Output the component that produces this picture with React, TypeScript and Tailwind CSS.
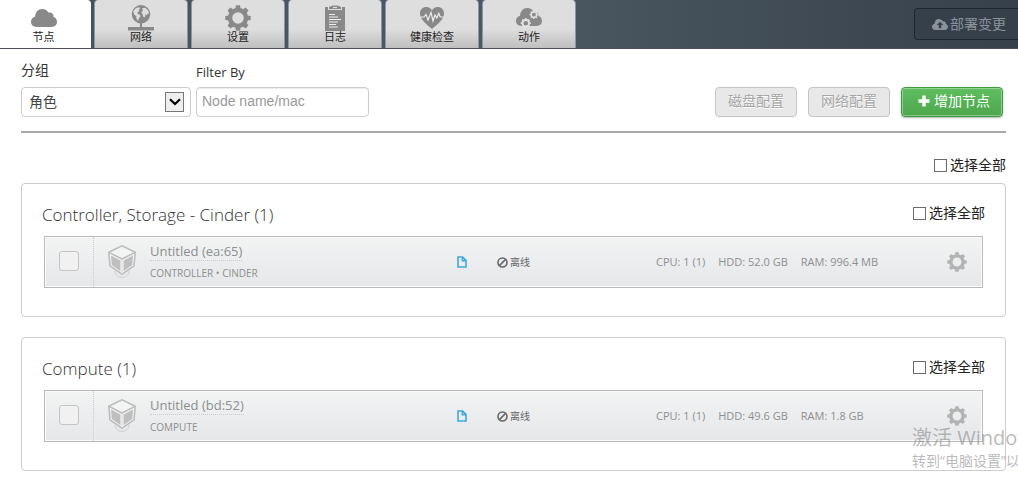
import React from "react";
import clsx from "clsx";

type NodeInfo = {
  name: string;
  roles: string;
  cpu: string;
  hdd: string;
  ram: string;
};

const groups: { title: string; nodes: NodeInfo[] }[] = [
  {
    title: "Controller, Storage - Cinder (1)",
    nodes: [
      {
        name: "Untitled (ea:65)",
        roles: "CONTROLLER • CINDER",
        cpu: "1 (1)",
        hdd: "52.0 GB",
        ram: "996.4 MB",
      },
    ],
  },
  {
    title: "Compute (1)",
    nodes: [
      {
        name: "Untitled (bd:52)",
        roles: "COMPUTE",
        cpu: "1 (1)",
        hdd: "49.6 GB",
        ram: "1.8 GB",
      },
    ],
  },
];

const toothAngles = [0, 45, 90, 135, 180, 225, 270, 315];

const GearShape = () => (
  <g>
    <circle cx="13" cy="13" r="8" fill="none" stroke="currentColor" strokeWidth="4.4" />
    {toothAngles.map((a) => (
      <path key={a} d="M10.4 4 L10.9 0.3 H15.1 L15.6 4 Z" fill="currentColor" transform={`rotate(${a} 13 13)`} />
    ))}
  </g>
);

const GearIcon = ({ className }: { className?: string }) => (
  <svg viewBox="0 0 26 26" className={className} aria-hidden="true">
    <GearShape />
  </svg>
);

const cloudPath =
  "M5.5 18 C2 18 0 15.8 0 12.8 C0 10.2 1.7 8.3 4 7.8 C4.2 3.4 7 0 11.2 0 C14.2 0 16.4 1.5 17.6 3.8 C20.4 3 22.8 5 22.6 8 C24.8 8.7 26 10.5 26 12.8 C26 15.8 24 18 20.6 18 Z";

const CloudIcon = () => (
  <svg viewBox="0 0 26 18" className="h-[18px] w-[26px]" aria-hidden="true">
    <path d={cloudPath} fill="currentColor" />
  </svg>
);

const GlobeIcon = () => (
  <svg viewBox="0 0 26 26" className="size-[26px]" aria-hidden="true">
    <circle cx="13" cy="9.2" r="9.2" fill="currentColor" />
    <path
      d="M5.2 6.2 L8 3 L11 2.2 L12.4 3.4 L10.6 4.6 L11.4 6 L9.4 7.4 L9.8 9 L11.6 9.4 L12.6 11 L10.8 13.4 L10 16 L8.4 13.4 L8.2 11 L6.4 10 Z M14 3.2 L17.4 2.8 L20.4 5.8 L21 9 L19.4 8.4 L19 10.6 L17.6 9.2 L16.8 12.4 L15 11.6 L14.4 8.8 L13.2 7.6 L14.8 5.6 Z"
      fill="#dddddd"
    />
    <path d="M12 18 H14 V22 H26 V25.4 H0 V22 H12 Z" fill="currentColor" />
  </svg>
);

const LogsIcon = () => (
  <svg viewBox="0 0 20 26" className="h-[26px] w-5" aria-hidden="true">
    <path d="M0 2 H3 V5 H17 V2 H20 V26 H0 Z" fill="currentColor" />
    <path d="M4 4 V2 L7.5 0.5 H12.5 L16 2 V4 Z" fill="currentColor" />
    <path d="M8 2.5 H12" stroke="#dddddd" strokeWidth="1.2" />
    <path d="M4 9.5 H10 M4 12 H13 M4 14.5 H16 M4 17 H13 M4 19.5 H11 M4 22 H13" stroke="#eeeeee" strokeWidth="1.1" />
  </svg>
);

const HeartIcon = () => (
  <svg viewBox="0 0 24 22" className="h-[22px] w-6" aria-hidden="true">
    <path
      d="M12 22 C8 18.2 0 13 0 6.4 C0 2.6 2.8 0 6.2 0 C9 0 11 1.4 12 3.4 C13 1.4 15 0 17.8 0 C21.2 0 24 2.6 24 6.4 C24 13 16 18.2 12 22 Z"
      fill="currentColor"
    />
    <path
      d="M0.6 10 H4 L6 7.4 L8 13 L11 5.4 L13 14 L15 8 L16.8 11 L18.8 6.4 L20.2 10 H23.4"
      fill="none"
      stroke="#eeeeee"
      strokeWidth="1.2"
    />
  </svg>
);

const ActionsIcon = () => (
  <svg viewBox="0 0 26 20" className="h-5 w-[26px]" aria-hidden="true">
    <path d={cloudPath} fill="currentColor" />
    <g transform="translate(13.5 2.2) scale(0.34)" className="text-[#e2e2e2]">
      <GearShape />
    </g>
    <g transform="translate(4.6 10) scale(0.4)" className="text-[#e2e2e2]">
      <GearShape />
    </g>
  </svg>
);

const ServerIcon = () => (
  <svg viewBox="0 0 28 33" className="h-[33px] w-7 shrink-0" aria-hidden="true">
    <path d="M6.5 26 C8 31 11 32.4 14 32.4 C17 32.4 20 31 21.5 26" fill="none" stroke="#cccccc" />
    <path d="M0.8 7.2 L14 0.8 L27.2 7.2 L26 20.8 L14 29.2 L2 20.8 Z" fill="#f3f4f4" stroke="#bdbdbd" strokeWidth="1.6" />
    <path d="M1 7.4 L14 14 L27 7.4 M14 14 V29" fill="none" stroke="#bdbdbd" strokeWidth="1.6" />
    <path d="M3 10.6 L12.4 15.4 V26.2 L3.8 20 Z M25 10.6 L15.6 15.4 V26.2 L24.2 20 Z" fill="#bfbfbf" />
    <path d="M14 14.8 V28.6" stroke="#f3f4f4" strokeWidth="1.4" />
  </svg>
);

const FileIcon = () => (
  <svg viewBox="0 0 10 12" className="h-3 w-[10px]" aria-hidden="true">
    <path d="M1 1 H5.6 L9 4.4 V11 H1 Z M5.4 1 V4.8 H9" fill="none" stroke="#3fa9dc" strokeWidth="1.6" />
  </svg>
);

const BanIcon = () => (
  <svg viewBox="0 0 11 11" className="size-[11px]" aria-hidden="true">
    <circle cx="5.5" cy="5.5" r="4.5" fill="none" stroke="currentColor" strokeWidth="1.6" />
    <path d="M2.4 8.6 L8.6 2.4" stroke="currentColor" strokeWidth="1.5" />
  </svg>
);

const UploadIcon = () => (
  <svg viewBox="0 0 26 18" className="h-[11px] w-4" aria-hidden="true">
    <path d={cloudPath} fill="currentColor" />
    <path d="M13 4.6 L18.4 10 H15 V15 H11 V10 H7.6 Z" fill="#35404b" />
  </svg>
);

const tabs = [
  { label: "节点", icon: <CloudIcon />, active: true },
  { label: "网络", icon: <GlobeIcon /> },
  { label: "设置", icon: <GearIcon className="size-[26px]" /> },
  { label: "日志", icon: <LogsIcon /> },
  { label: "健康检查", icon: <HeartIcon /> },
  { label: "动作", icon: <ActionsIcon /> },
];

const Header = () => (
  <header className="flex justify-between border-b border-[#4a4e56] bg-linear-to-r from-[#46525d] via-[#4c5862] to-[#36414c]">
    <nav className="flex gap-[3px]">
      {tabs.map((tab) => (
        <a
          key={tab.label}
          href="#"
          className={clsx(
            "flex h-12 flex-col items-center text-[11px] leading-[14px] text-[#222222]",
            tab.active
              ? "w-[91px] rounded-tr-sm bg-white pr-1"
              : "w-[94px] rounded-t-sm border-x border-[#8b97a5] bg-linear-to-b from-[#dedede] from-60% to-[#bfbfbf]"
          )}
        >
          <span className="flex h-[30px] items-center pt-[6px] text-[#898989]">{tab.icon}</span>
          {tab.label}
        </a>
      ))}
    </nav>
    <div className="pt-2">
      <button
        disabled
        className="flex h-8 items-center gap-[2px] rounded-l border border-r-0 border-[#20272e] bg-[#35404b] pr-3 pl-[17px] text-sm text-[#8b9299]"
      >
        <UploadIcon />
        部署变更
      </button>
    </div>
  </header>
);

const SelectAll = ({ id }: { id: string }) => (
  <div className="flex items-center gap-[3px] text-sm leading-5 text-[#222222]">
    <input id={id} type="checkbox" className="size-[13px] appearance-none border border-[#6b6b6b] bg-white checked:bg-gray-500" />
    <label htmlFor={id}>选择全部</label>
  </div>
);

const Toolbar = () => (
  <div className="flex items-end justify-between border-b-2 border-[#a9a9a9] pt-[11px] pb-[14px]">
    <div className="flex gap-[5px] text-[#333333]">
      <div>
        <label htmlFor="grouping" className="block h-[27px] text-sm leading-5">
          分组
        </label>
        <div className="relative">
          <select
            id="grouping"
            className="block h-[30px] w-[170px] appearance-none rounded border border-[#cccccc] bg-white px-[7px] text-sm text-[#444444]"
          >
            <option>角色</option>
          </select>
          <span className="pointer-events-none absolute top-[5px] right-[7px] flex h-5 w-[19px] items-center justify-center border border-[#777777] bg-[#eeeeee]">
            <svg viewBox="0 0 12 8" className="h-2 w-3" aria-hidden="true">
              <path d="M1 1.2 L6 6 L11 1.2" fill="none" stroke="#000000" strokeWidth="2.2" />
            </svg>
          </span>
        </div>
      </div>
      <div>
        <label htmlFor="filter" className="block h-[27px] text-[13px] leading-6">
          Filter By
        </label>
        <input
          id="filter"
          type="text"
          placeholder="Node name/mac"
          className="block h-[30px] w-[173px] rounded border border-[#cccccc] bg-white px-[5px] pb-[2px] font-['Liberation_Sans',sans-serif] text-sm shadow-[inset_0_1px_1px_rgba(0,0,0,0.08)] placeholder:text-[#999999]"
        />
      </div>
    </div>
    <div className="flex gap-[11px] pr-[3px] text-sm">
      {["磁盘配置", "网络配置"].map((label) => (
        <button
          key={label}
          disabled
          className="h-[30px] rounded border border-[#c4c4c4] bg-[#e8e8e8] px-3 pb-[2px] text-[#a5a5a5] [text-shadow:0_1px_0_#fff]"
        >
          {label}
        </button>
      ))}
      <button className="flex h-[30px] items-center gap-1 rounded border border-[#3f9a3f] bg-linear-to-b from-[#5fbe5f] to-[#4ea64e] pr-3 pb-[2px] pl-4 text-white shadow-[inset_0_0_0_1px_rgba(255,255,255,0.35),0_1px_2px_rgba(0,0,0,0.3)]">
        <svg viewBox="0 0 12 12" className="size-3" aria-hidden="true">
          <path d="M6 0.5 V11.5 M0.5 6 H11.5" stroke="currentColor" strokeWidth="3.4" />
        </svg>
        增加节点
      </button>
    </div>
  </div>
);

const NodeRow = ({ node }: { node: NodeInfo }) => (
  <div className="flex h-[52px] items-center border border-[#b9babb] bg-linear-to-b from-[#f2f3f3] to-[#e6e7e9] text-[#8d8f8f] shadow-[inset_0_0_0_1px_#fafafa]">
    <div className="flex w-[49px] items-center self-stretch border-r border-dotted border-[#cccccc] pb-[2px] pl-[14px]">
      <input
        type="checkbox"
        aria-label={node.name}
        className="size-5 appearance-none rounded-[3px] border border-[#c4c4c4] bg-[#f1f1f1] checked:bg-gray-400"
      />
    </div>
    <div className="flex w-14 justify-center pb-[2px]">
      <ServerIcon />
    </div>
    <div className="min-w-0 flex-1 pb-1">
      <button className="block border-b border-dotted border-[#cccccc] text-[13px] leading-[18px]">{node.name}</button>
      <div className="pt-[6px] text-[10px] leading-3">{node.roles}</div>
    </div>
    <div className="w-10">
      <a href="#" aria-label="日志" className="block">
        <FileIcon />
      </a>
    </div>
    <div className="flex w-[159px] items-center gap-[2px] text-[10px] text-[#666666]">
      <BanIcon />
      离线
    </div>
    <div className="flex w-[291px] gap-[13px] text-[11px] whitespace-nowrap">
      <span>CPU: {node.cpu}</span>
      <span>HDD: {node.hdd}</span>
      <span>RAM: {node.ram}</span>
    </div>
    <button aria-label="设置" className="mr-[15px] text-[#b3b3b3]">
      <GearIcon className="size-5" />
    </button>
  </div>
);

const App = () => {
  return (
    <div className="relative overflow-hidden bg-white pb-[15px] font-['Open_Sans','Noto_Sans_CJK_SC',sans-serif]">
      <Header />
      <main className="pr-3 pl-[21px]">
        <Toolbar />
        <div className="flex justify-end pt-[22px] pb-2">
          <SelectAll id="all" />
        </div>
        <div className="flex flex-col gap-5">
          {groups.map((group, i) => (
            <section key={group.title} className="rounded border border-[#cccccc] pt-[18px] pr-[22px] pb-7 pl-[22px]">
              <div className="-mx-[2px] flex h-[34px] items-start justify-between">
                <h2 className="text-[17px] leading-[26px] font-light text-[#333333]">{group.title}</h2>
                <div className="pt-px">
                  <SelectAll id={`group-${i}`} />
                </div>
              </div>
              {group.nodes.map((node) => (
                <NodeRow key={node.name} node={node} />
              ))}
            </section>
          ))}
        </div>
      </main>
      {/* Activation notice over the bottom right corner */}
      <div className="pointer-events-none absolute right-0 bottom-[14px] w-[106px] overflow-hidden whitespace-nowrap text-[#8a8a8a]/60">
        <p className="text-xl leading-6">激活 Windows</p>
        <p className="text-sm leading-[22px]">转到“电脑设置”以激活 Windows。</p>
      </div>
    </div>
  );
};

export default App;
